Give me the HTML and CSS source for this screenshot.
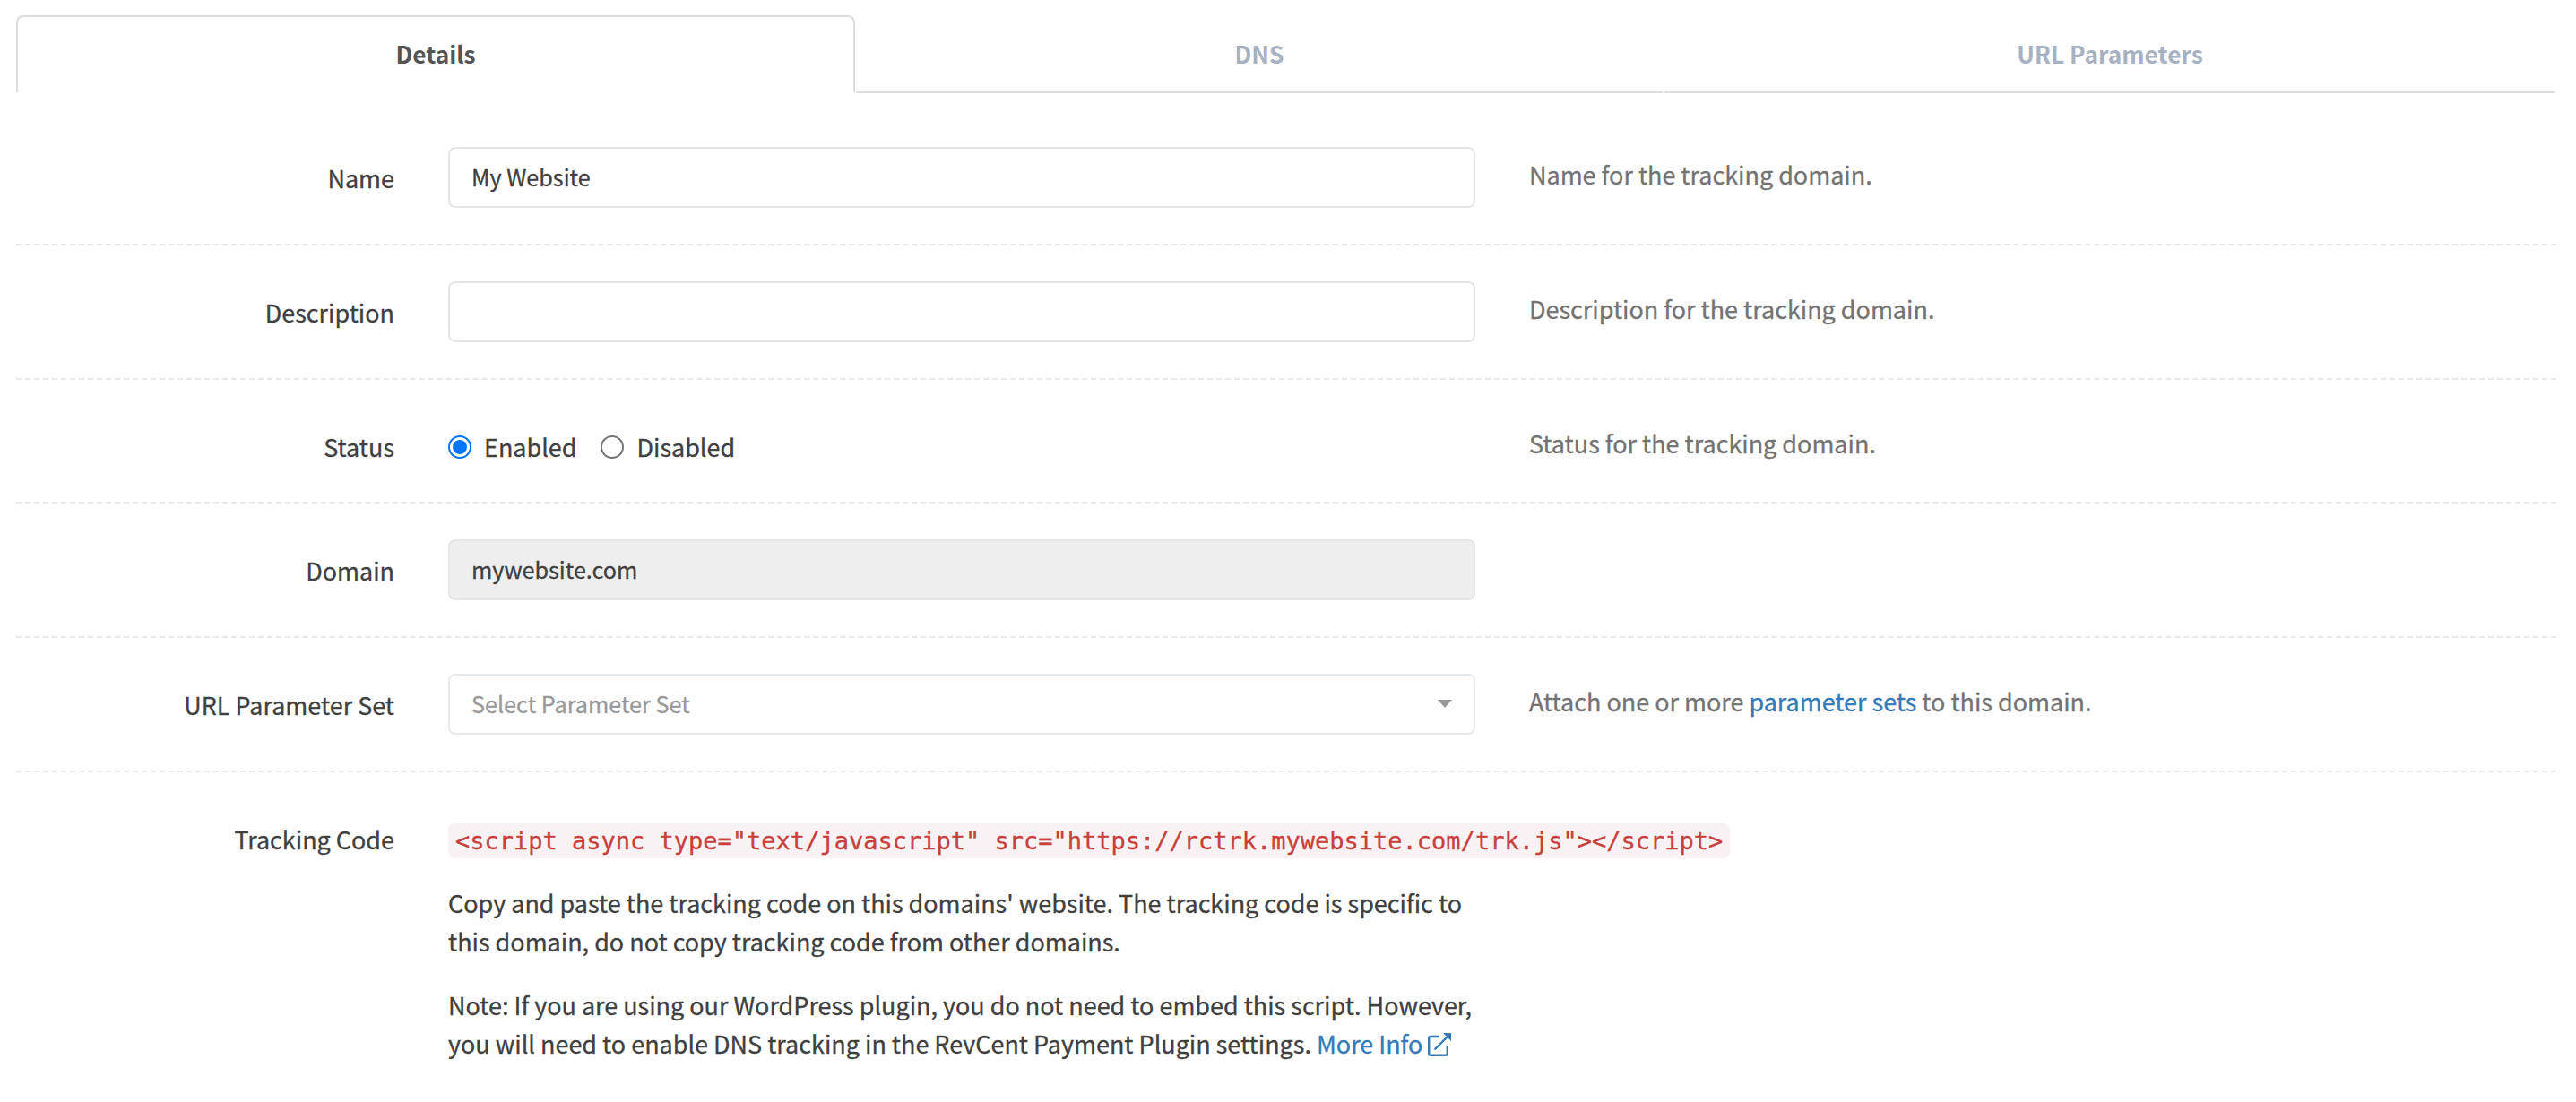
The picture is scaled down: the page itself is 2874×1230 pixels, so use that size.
FILE: index.html
```html
<!DOCTYPE html>
<html lang="en">
<head>
    <meta charset="UTF-8">
    <meta name="viewport" content="width=device-width, initial-scale=1.0">
    <title>Tracking Domain</title>
    <link rel="stylesheet" href="styles.css">
</head>
<body>
    <nav class="tabs">
        <a class="tab active">Details</a>
        <a class="tab">DNS</a>
        <a class="tab">URL Parameters</a>
    </nav>

    <form class="domain-form">
        <div class="form-row">
            <label class="form-label" for="name">Name</label>
            <div class="form-field">
                <input type="text" id="name" class="form-control" value="My Website">
            </div>
            <div class="help">Name for the tracking domain.</div>
        </div>

        <div class="form-row">
            <label class="form-label" for="description">Description</label>
            <div class="form-field">
                <input type="text" id="description" class="form-control">
            </div>
            <div class="help">Description for the tracking domain.</div>
        </div>

        <div class="form-row">
            <label class="form-label">Status</label>
            <div class="form-field radios">
                <label class="radio"><input type="radio" name="status" checked>Enabled</label>
                <label class="radio"><input type="radio" name="status">Disabled</label>
            </div>
            <div class="help">Status for the tracking domain.</div>
        </div>

        <div class="form-row">
            <label class="form-label" for="domain">Domain</label>
            <div class="form-field">
                <input type="text" id="domain" class="form-control" value="mywebsite.com" readonly>
            </div>
        </div>

        <div class="form-row">
            <label class="form-label">URL Parameter Set</label>
            <div class="form-field">
                <div class="form-control select">
                    <span>Select Parameter Set</span>
                    <i class="caret"></i>
                </div>
            </div>
            <div class="help">Attach one or more <a href="#">parameter sets</a> to this domain.</div>
        </div>

        <div class="form-row">
            <label class="form-label">Tracking Code</label>
            <div class="form-field tracking">
                <code>&lt;script async type="text/javascript" src="https://rctrk.mywebsite.com/trk.js"&gt;&lt;/script&gt;</code>
                <p>Copy and paste the tracking code on this domains' website. The tracking code is specific to<br>this domain, do not copy tracking code from other domains.</p>
                <p>Note: If you are using our WordPress plugin, you do not need to embed this script. However,<br>you will need to enable DNS tracking in the RevCent Payment Plugin settings. <a href="#">More Info <svg class="icon" viewBox="0 0 26 26" width="26" height="26"><path d="M12.500 4H3Q1.200 4 1.200 5.800V23Q1.200 24.800 3 24.800H20Q21.800 24.800 21.800 23V14M7.500 18.500L21.500 4.500" fill="none" stroke="currentColor" stroke-width="2.4"/><path d="M17 0H26V9Z" fill="currentColor"/></svg></a></p>
            </div>
        </div>
    </form>
</body>
</html>
```
FILE: styles.css
```css
body {
    font-family: "Noto Sans CJK SC", "Noto Sans", sans-serif;
    font-size: 26.96px;
    line-height: 43px;
    margin: 0;
    padding: 17px 22px 0 18px;
    background: #fff;
    color: #404040;
    -webkit-text-stroke: 0.3px;
}
a {
    color: #337ab7;
    text-decoration: none;
}

/* Tabs */
.tabs {
    display: grid;
    grid-template-columns: 936px 902px 1fr;
    height: 87px;
    margin-bottom: 20px;
}
.tab {
    border: 2px solid transparent;
    border-bottom-color: #ddd;
    border-radius: 8px 8px 0 0;
    padding-top: 19px;
    text-align: center;
    font-size: 26.3px;
    font-weight: bold;
    color: #a7b1c2;
    -webkit-text-stroke: 0;
}
.tab.active {
    border-color: #ddd #ddd transparent;
    color: #555;
}

/* Form rows */
.form-row {
    display: grid;
    grid-template-columns: 422px 1146px 1fr;
    column-gap: 60px;
    padding: 40px 0;
    border-bottom: 2px dashed #e7eaec;
}
.form-row:last-child {
    border-bottom: none;
}
.form-label {
    padding-top: 13px;
    text-align: right;
}
.help {
    padding-top: 9px;
    color: #737373;
}
.form-control {
    display: block;
    box-sizing: border-box;
    width: 100%;
    height: 68px;
    padding: 0 24px 2px;
    border: 2px solid #e5e6e7;
    border-radius: 8px;
    background: #fff;
    font-family: inherit;
    font-size: 25.2px;
    color: #404040;
    -webkit-text-stroke: 0.3px;
}
.form-control[readonly] {
    background: #eee;
}
.select {
    display: flex;
    align-items: center;
    justify-content: space-between;
    border-color: #e7eaec;
    color: #999;
}
.caret {
    border: 8px solid transparent;
    border-top: 9px solid #999;
    border-bottom: none;
}

/* Status */
.radios {
    display: flex;
    gap: 27px;
    height: 43px;
    padding-top: 13px;
}
.radio {
    display: flex;
    align-items: flex-start;
}
.radio input {
    appearance: none;
    box-sizing: border-box;
    width: 26px;
    height: 26px;
    margin: 9px 14px 0 0;
    border: 2px solid #767676;
    border-radius: 50%;
    background: #fff;
}
.radio input:checked {
    border-color: #0075ff;
    padding: 3px;
    background: #0075ff content-box;
}

/* Tracking code */
code {
    display: inline-block;
    margin-top: 17px;
    padding: 0 8px;
    border-radius: 8px;
    background: #f9f2f4;
    font-family: "DejaVu Sans Mono", monospace;
    font-size: 27px;
    line-height: 39px;
    white-space: nowrap;
    color: #c7403c;
}
.tracking p {
    margin: 0 0 28px;
    white-space: nowrap;
}
.tracking code + p {
    margin-top: 28px;
}
.icon {
    vertical-align: -3px;
}
```
